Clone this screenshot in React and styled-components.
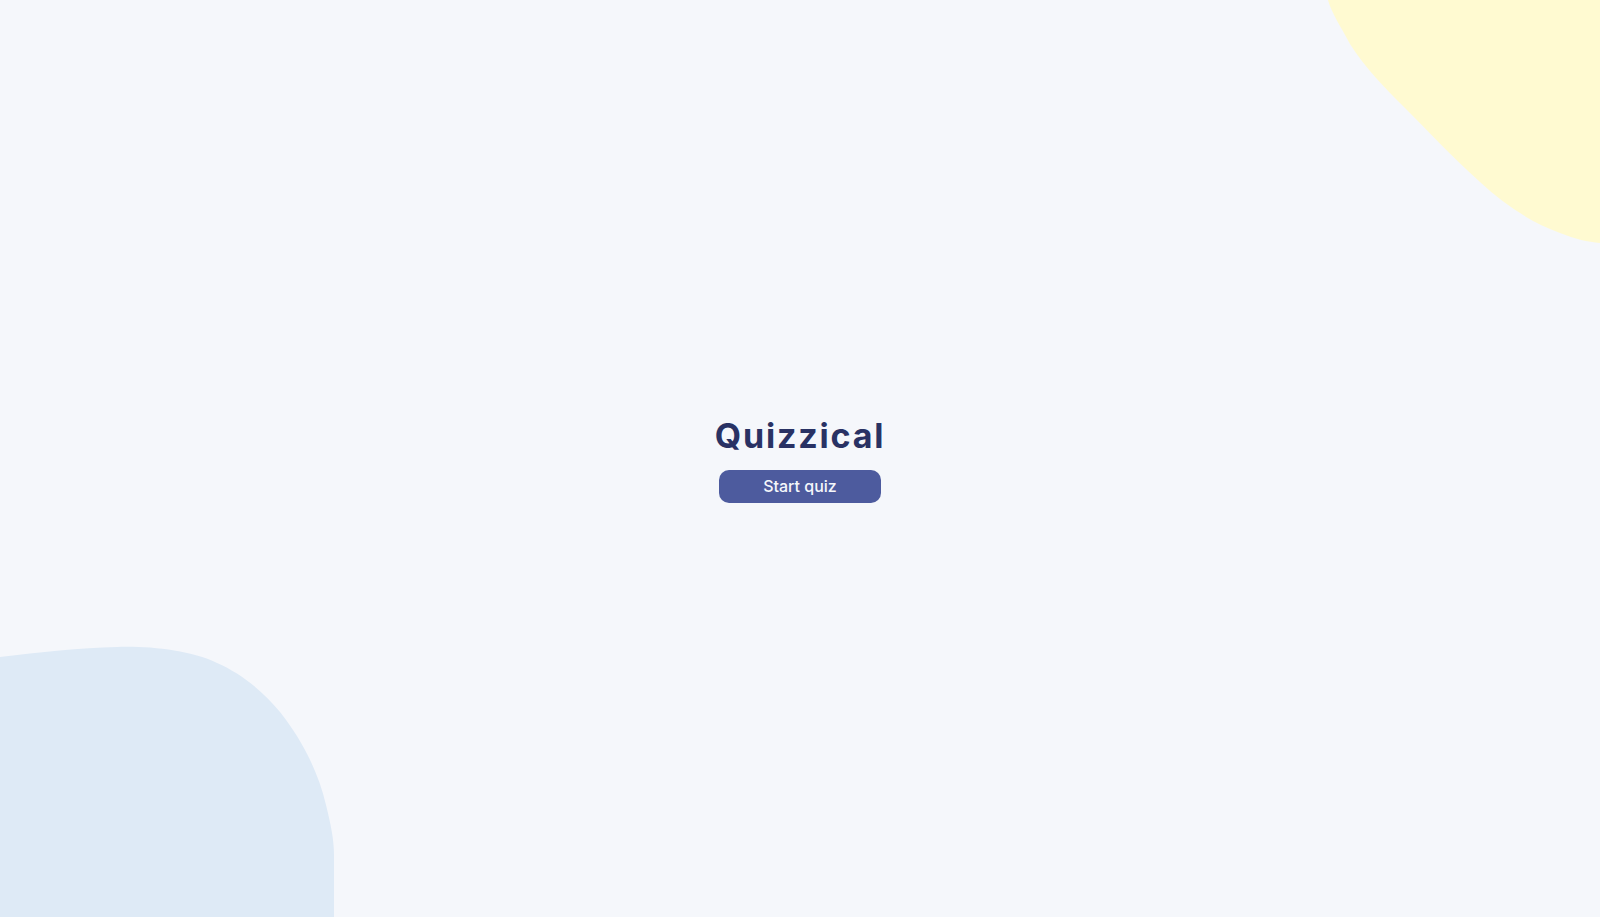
import React from "react";
import styled, { createGlobalStyle } from "styled-components";

const Global = createGlobalStyle`
  html, body { margin: 0; padding: 0; }
  body { background: #F5F7FB; font-family: Inter, "Noto Sans", sans-serif; }
`;

const Page = styled.main`
  position: relative;
  width: 100%;
  height: 917px;
  overflow: hidden;
  display: flex;
  flex-direction: column;
  align-items: center;
  justify-content: center;
  background: #F5F7FB;
`;

const Blob = styled.svg`
  position: absolute;
  inset: 0;
  width: 100%;
  height: 100%;
  pointer-events: none;
  z-index: 0;
`;

const Content = styled.section`
  position: relative;
  z-index: 1;
  display: flex;
  flex-direction: column;
  align-items: center;
  margin-top: 1px;
`;

const Title = styled.h1`
  margin: 0 0 14px;
  font-family: Inter, sans-serif;
  font-weight: 700;
  font-size: 34px;
  line-height: 40px;
  letter-spacing: 1.8px;
  color: #293264;
`;

const StartButton = styled.button`
  width: 162px;
  height: 33px;
  border: none;
  border-radius: 10px;
  background: #4D5B9E;
  color: #F5F7FB;
  font-family: Inter, sans-serif;
  font-weight: 500;
  font-size: 16px;
  cursor: pointer;
`;

export default function App() {
  return (
    <>
      <Global />
      <Page>
        <Blob viewBox="0 0 1600 917" preserveAspectRatio="none">
          <path
            fill="#FFFAD1"
            d="M1328,0 C1332,14 1340,25 1350,44 C1365,68 1385,88 1405,108 C1430,133 1450,155 1480,182 C1505,205 1530,222 1560,233 C1575,239 1588,242 1600,243 L1600,0 Z"
          />
          <path
            fill="#DEEAF6"
            d="M0,657 C40,652 80,648 117,647 C150,646 190,650 217,663 C240,673 262,690 280,712 C300,737 318,770 326,805 C331,825 334,840 334,855 L334,917 L0,917 Z"
          />
        </Blob>
        <Content>
          <Title>Quizzical</Title>
          <StartButton>Start quiz</StartButton>
        </Content>
      </Page>
    </>
  );
}
